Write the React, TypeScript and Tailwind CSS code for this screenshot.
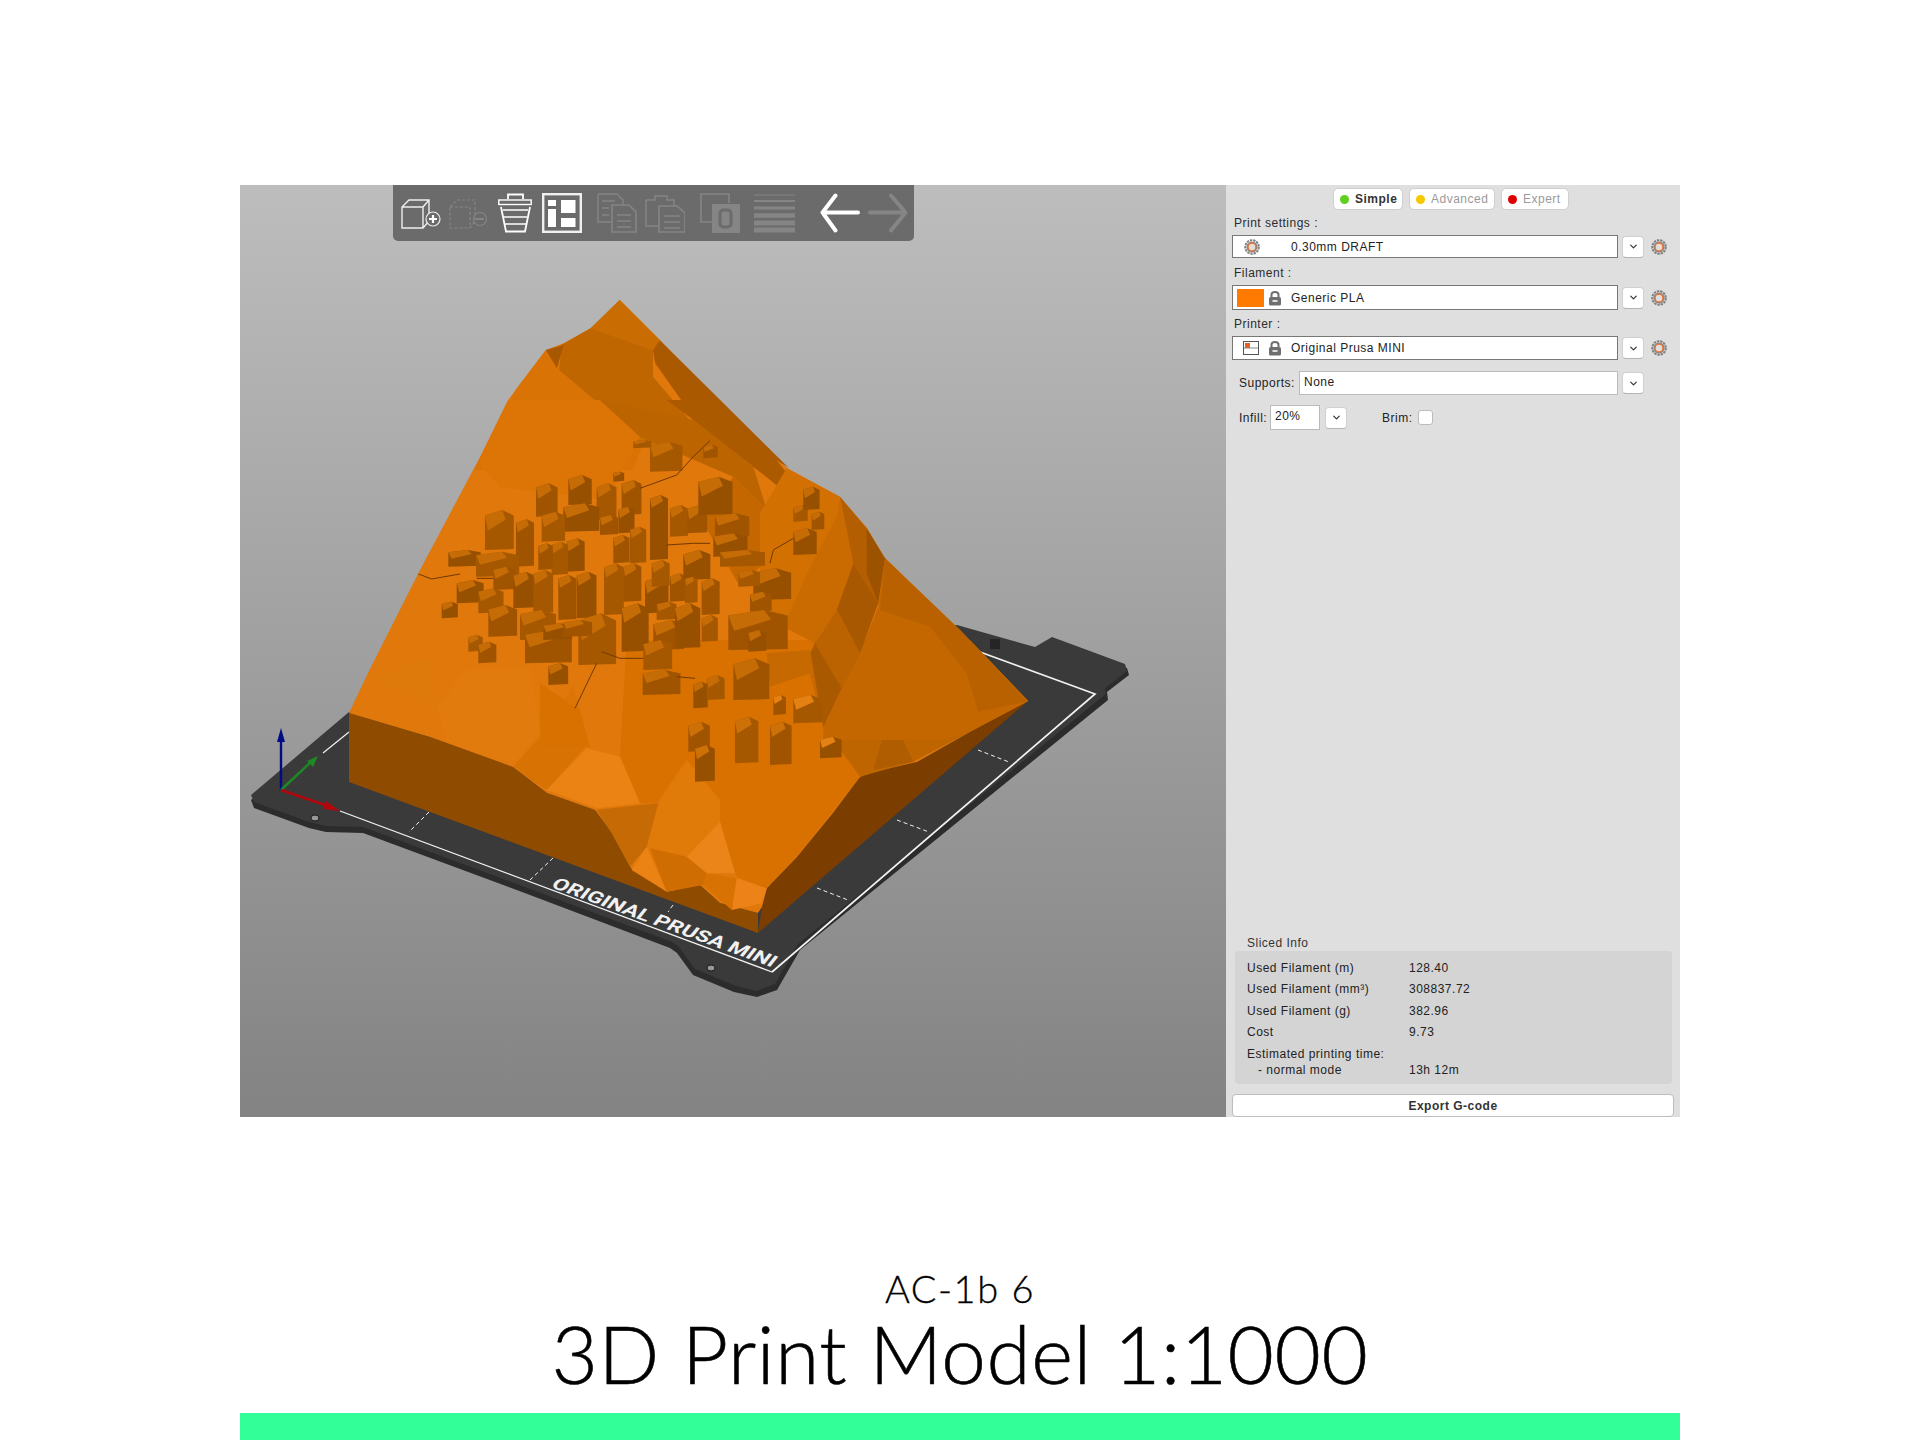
import React from "react";
import { ChevronDown } from "lucide-react";

type Facet = [string, string];

// boxes measured on the town crop, [x, top, width, bottom]
const town: number[][] = [
  [408,250,60,350],[505,225,65,315],[590,250,55,360],[665,240,55,345],[750,285,50,480],[810,315,50,410],[862,315,55,400],[895,230,95,345],
  [255,330,80,450],[348,358,50,500],[490,310,100,395],[425,335,65,425],[600,345,50,405],[655,320,45,400],[690,380,45,490],[640,405,45,490],
  [500,415,50,515],[455,425,45,525],[415,430,40,510],[145,450,90,500],[228,455,120,530],[280,500,60,570],[170,540,75,610],[235,565,70,640],
  [265,615,80,710],[340,515,60,625],[400,510,55,640],[475,525,50,660],[530,515,55,655],[612,490,55,645],[670,490,50,605],[735,530,65,640],
  [755,480,50,560],[810,520,45,605],[850,450,75,540],[855,530,35,610],[945,340,95,410],[940,400,95,470],[960,450,125,500],[905,535,50,645],
  [1060,505,105,600],[1015,510,60,560],[1050,575,60,635],[665,610,75,755],[770,605,55,660],[760,660,85,750],[825,610,70,745],[905,645,45,725],
  [985,630,165,750],[1045,690,50,755],[360,630,100,720],[375,690,130,790],[430,670,80,720],[535,640,105,795],[490,660,80,710],[445,790,55,855],
  [205,705,40,755],[235,725,50,790],[125,605,45,655],[730,720,80,810],[728,810,105,885],[880,845,40,925],[920,825,50,900],[1000,775,100,900],
  [1180,385,65,465],[1180,315,40,365],[1235,335,35,390],[1210,260,45,330],[750,125,90,215],[910,135,40,175],[640,215,30,245],[700,120,50,145],
];

// same, on the crop of the south slope
const southHouses: number[][] = [
  [445,245,60,335],[465,315,55,425],[585,230,65,370],[690,245,60,375],[840,290,60,355],[760,165,80,250],[700,165,35,225],
];

const topFacets: Facet[] = [
  ["#da7305", "685,540 835,735 900,830 880,900 525,900 620,655"],
  ["#c96c02", "850,390 785,475 925,540 940,510"],
  ["#bf6600", "785,475 720,525 715,600 835,735 1020,770 925,620 925,540"],
  ["#a85800", "685,540 725,525 710,595"],
  ["#aa5900", "940,510 925,540 930,580 1020,750 1120,800 1230,895"],
  ["#cb6d00", "835,735 1020,770 1040,810 1000,850 900,830"],
];

const townFacets: Facet[] = [
  ["#dc7406", "325,0 600,0 720,110 620,300 300,260 235,185"],
  ["#bb6400", "600,0 880,60 1060,200 1100,330 1000,230 720,110"],
  ["#ac5a00", "800,0 950,0 1125,175 1165,225 1160,280 1060,200 880,60"],
  ["#c46700", "1000,230 1100,330 1160,420 1020,560 900,350"],
];

const eastFacets: Facet[] = [
  ["#d27002", "80,85 240,170 230,230 150,380 70,560 0,500 0,220"],
  ["#c96b00", "240,170 280,370 230,510 165,610 70,560 150,380 230,230"],
  ["#c46700", "375,355 800,785 640,870 560,900 190,900 190,860 245,745 300,640 355,500"],
  ["#b96100", "375,355 600,570 800,785 655,815 620,700 510,560 360,510"],
  ["#b35e00", "240,170 320,265 355,490 280,370"],
  ["#9d5200", "320,265 375,355 355,490 320,400"],
  ["#a85800", "280,370 355,490 300,640 230,510"],
  ["#bb6300", "230,510 300,640 245,745 165,610"],
  ["#a95a00", "165,610 245,745 190,860 150,640"],
  ["#c56900", "20,640 150,630 190,860 150,700 30,740"],
];

const southFacets: Facet[] = [
  ["#d87100", "260,0 820,0 850,260 960,410 770,650 680,745 590,710 540,545 540,480 440,360 350,490 300,490 240,350"],
  ["#d87100", "150,320 120,210 0,130 0,320"],
  ["#bf6500", "820,0 1290,0 1465,183 1310,265 1120,365 960,410 850,260"],
  ["#b05c00", "1050,215 1120,365 1000,390"],
  ["#a85800", "820,100 900,130 850,260"],
  ["#e07a08", "440,360 540,480 540,545 450,650 320,620 355,490"],
  ["#ec8519", "540,545 585,700 500,700 440,650"],
  ["#d06d02", "440,650 500,700 490,735 380,755 330,625"],
  ["#ea8214", "320,620 380,755 275,690"],
  ["#c56a05", "300,495 355,490 320,620 270,680 215,580 170,510"],
  ["#ea8214", "20,450 140,325 240,350 300,490 170,505"],
  ["#ed8318", "590,715 680,745 665,790 575,810"],
  ["#d77203", "590,715 575,810 490,735 500,700"],
];

const westFacets: Facet[] = [
  ["#de790b", "90,350 280,290 280,440"],
  ["#e27b0d", "290,440 380,330 570,320 600,520 520,610 410,580 320,545"],
  ["#d87303", "600,530 745,550 620,690 520,620"],
  ["#dc7505", "600,530 700,380 745,550"],
];

const roads = [
  "M55 522 L95 537 L180 522",
  "M230 535 L280 535",
  "M720 265 L830 225 L880 170 L930 122",
  "M605 755 L660 775 L730 775",
  "M830 830 L885 835",
  "M590 790 L525 925",
  "M1110 490 L1120 450 L1180 415",
  "M800 435 L880 430 L930 430",
];

const Facets = ({ items }: { items: Facet[] }) => (
  <>
    {items.map(([fill, points]) => (
      <polygon key={points} points={points} fill={fill} />
    ))}
  </>
);

const House = ({ d, i, roof = "#c56c06" }: { d: number[]; i: number; roof?: string }) => {
  const [x, y, bw, b] = d;
  const w = bw * 1.08;
  const r = Math.min((b - y) * 0.4, w * 0.55);
  const body = i % 3 === 0 ? "#a05400" : i % 3 === 1 ? "#975000" : "#a65800";
  return (
    <g>
      <path d={`M${x} ${y + r * 0.35} L${x + w * 0.6} ${y} L${x + w} ${y + r * 0.35} L${x + w} ${b - 3} L${x} ${b} Z`} fill={body} />
      <path d={`M${x} ${y + r * 0.35} L${x + w * 0.6} ${y} L${x + w * 0.72} ${y + r * 0.6} L${x + w * 0.1} ${y + r * 1.3} Z`} fill={roof} />
    </g>
  );
};

const Scene = () => (
  <svg viewBox="240 185 986 932" className="block w-full h-full">
    <defs>
      <linearGradient id="bg" x1="0" y1="0" x2="0" y2="1">
        <stop offset="0" stopColor="#bdbdbd" />
        <stop offset="1" stopColor="#838383" />
      </linearGradient>
    </defs>
    <rect x="240" y="185" width="986" height="932" fill="url(#bg)" />
    {/* print bed */}
    <path
      d="M349 715 L957 628 L1035 650 L1052 640 L1127 668 L1129 675 L1107 692 L1108 700 L800 950 L777 990 L757 997 L734 992 L693 975 L677 953 L670 948 L530 895 L363 833 L326 832 L309 828 L254 808 L251 800 Z"
      fill="#2c2c2c"
    />
    <path
      d="M349 712 L957 625 L1035 647 L1052 637 L1125 664 L1127 671 L1105 688 L1106 694 L798 944 L775 984 L757 991 L736 986 L695 969 L679 947 L672 942 L530 889 L363 827 L326 826 L309 822 L254 802 L251 795 Z"
      fill="#3a3a3a"
    />
    <g fill="none" stroke="#f2f2f2">
      <path d="M340 811 L772 972" strokeWidth="1.3" />
      <path d="M772 972 L1095 694 L980 652" strokeWidth="1.7" />
      <path d="M349 732 L323 753" strokeWidth="1.2" />
      <path
        d="M429 812 L409 832 M553 858 L530 880 M673 905 L668 912 M978 750 L1009 762 M897 820 L929 832 M817 888 L848 900"
        strokeWidth="1"
        strokeDasharray="4 3"
      />
    </g>
    <text
      transform="matrix(0.94 0.34 -0.7 0.88 550 887)"
      fontFamily="Roboto, sans-serif"
      fontWeight="700"
      fontSize="16"
      fill="#f1f1f1"
      textLength="236"
      lengthAdjust="spacingAndGlyphs"
    >
      ORIGINAL PRUSA MINI
    </text>
    <ellipse cx="315" cy="818" rx="4" ry="3" fill="#999" stroke="#1c1c1c" />
    <ellipse cx="711" cy="968" rx="4" ry="3" fill="#999" stroke="#1c1c1c" />
    <rect x="990" y="639" width="10" height="10" fill="#252525" />
    {/* side faces */}
    <path d="M1028 701 L977 728 L917 762 L873 772 L860 777 L833 813 L797 857 L767 888 L762 907 L758 933 Z" fill="#7c3e00" />
    <path
      d="M349 713 L430 737 L513 767 L547 793 L595 810 L612 833 L623 853 L632 870 L650 878 L667 892 L700 885 L720 903 L758 913 L758 933 L349 782 Z"
      fill="#8f4b00"
    />
    {/* top of the terrain */}
    <path
      d="M620 300 L660 340 L717 400 L760 445 L787 468 L840 497 L867 528 L885 558 L960 630 L1028 701 L977 728 L917 762 L873 772 L860 777 L833 813 L797 857 L767 888 L762 907 L758 913 L720 903 L700 885 L667 892 L650 878 L632 870 L623 853 L612 833 L595 810 L547 793 L513 767 L430 737 L349 713 L368 673 L420 570 L480 457 L508 400 L546 350 L564 343 L593 327 Z"
      fill="#e0780b"
    />
    <g transform="translate(240 170) scale(0.44643 0.33333)">
      <Facets items={topFacets} />
    </g>
    <g transform="translate(400 400) scale(0.33333)">
      <Facets items={townFacets} />
    </g>
    <g transform="translate(340 560) scale(0.33333)">
      <Facets items={westFacets} />
    </g>
    <g transform="translate(540 640) scale(0.33333)">
      <Facets items={southFacets} />
    </g>
    <g transform="translate(760 440) scale(0.33333)">
      <Facets items={eastFacets} />
    </g>
    <g transform="translate(400 400) scale(0.33333)">
      {town.map((d, i) => (
        <House key={i} d={d} i={i} />
      ))}
      {roads.map((d) => (
        <path key={d} d={d} fill="none" stroke="#6e3800" strokeWidth="3" />
      ))}
    </g>
    <g transform="translate(540 640) scale(0.33333)">
      {southHouses.map((d, i) => (
        <House key={i} d={d} i={i} roof={i > 3 ? "#e58012" : "#cd7008"} />
      ))}
    </g>
    {/* axes */}
    <path d="M281 790 L281 740" stroke="#000c84" strokeWidth="2.4" />
    <polygon points="281,728 277,742 285,742" fill="#000c84" />
    <path d="M281 790 L313 760" stroke="#1c8a24" strokeWidth="2.4" />
    <polygon points="318,756 307,761 313,767" fill="#1c8a24" />
    <path d="M281 790 L328 806" stroke="#b3060c" strokeWidth="2.4" />
    <polygon points="340,811 326,801 323,809" fill="#b3060c" />
  </svg>
);

const Ico = ({ w, children, className }: { w: number; children: React.ReactNode; className?: string }) => (
  <svg width={w} height="40" viewBox={`0 0 ${w} 40`} fill="none" className={className}>
    {children}
  </svg>
);

const Toolbar = () => (
  <div className="absolute left-[153px] top-0 w-[521px] h-[56px] bg-[#6b6b6b] rounded-b-[5px] flex items-center pl-[8px]">
    <Ico w={40}>
      <path d="M1 14 L8 7 L28 7 L28 28 L22 35 L1 35 Z M1 14 L22 14 L22 35 M22 14 L28 7" stroke="#eee" strokeWidth="1.4" />
      <circle cx="32" cy="26" r="7" fill="#6b6b6b" stroke="#eee" strokeWidth="1.2" />
      <path d="M32 22 V30 M28 26 H36" stroke="#fff" strokeWidth="2.2" />
    </Ico>
    <Ico w={40} className="ml-[8px]">
      <path d="M1 14 L8 7 L26 7 L26 28 L21 35 L1 35 Z M1 14 L21 14 L21 35" stroke="#858585" strokeWidth="1.2" strokeDasharray="3 2" />
      <circle cx="31" cy="26" r="6.5" stroke="#858585" strokeWidth="1.2" />
      <path d="M27 26 H35" stroke="#858585" strokeWidth="2" />
    </Ico>
    <Ico w={34} className="ml-[9px]">
      <path d="M10 6 V1.5 H25 V6" stroke="#fff" strokeWidth="1.8" />
      <rect x="0.8" y="7" width="32.4" height="4.5" stroke="#fff" strokeWidth="1.4" />
      <path d="M3 14 L8 38.5 H27 L32 14" stroke="#fff" strokeWidth="1.8" />
      <path d="M5 17 H30 M6 24 H29 M7 31 H28" stroke="#fff" strokeWidth="1.7" />
    </Ico>
    <Ico w={40} className="ml-[10px]">
      <rect x="1.2" y="1.2" width="37.6" height="37.6" stroke="#f0f0f0" strokeWidth="2.4" />
      <rect x="6" y="7" width="8" height="6" fill="#fff" />
      <rect x="6" y="16" width="8" height="18" fill="#fff" />
      <rect x="19" y="7" width="14.5" height="13" fill="#fff" />
      <rect x="19" y="25" width="14.5" height="9" fill="#fff" />
    </Ico>
    <Ico w={40} className="ml-[15px]">
      <path d="M1 1 H20 L26 7 V12 M1 1 V29 H14" stroke="#858585" strokeWidth="1.4" />
      <path d="M15 12 H32 L39 19 V39 H15 Z" stroke="#858585" strokeWidth="1.6" />
      <path d="M5 8 H18 M5 15 H12 M5 22 H12 M20 22 H34 M20 28 H34 M20 34 H34" stroke="#858585" strokeWidth="1.4" />
    </Ico>
    <Ico w={40} className="ml-[8px]">
      <path d="M1 7 H10 V3 H22 V7 H29 V13 M1 7 V33 H13" stroke="#858585" strokeWidth="1.5" />
      <path d="M14 13 H32 L40 20 V39 H14 Z" stroke="#858585" strokeWidth="1.6" />
      <path d="M19 23 H35 M19 29 H35 M19 35 H35" stroke="#858585" strokeWidth="1.4" />
    </Ico>
    <Ico w={40} className="ml-[15px]">
      <path d="M12 29 H1 V1 H29 V10" stroke="#858585" strokeWidth="1.6" />
      <rect x="12" y="11" width="28" height="29" fill="#858585" />
      <rect x="20" y="17" width="11" height="17" rx="3.5" stroke="#6b6b6b" strokeWidth="3" />
    </Ico>
    <Ico w={41} className="ml-[14px]">
      <path d="M0 2 H41" stroke="#858585" strokeWidth="1" />
      <path d="M0 8 H41" stroke="#858585" strokeWidth="2" />
      <path d="M0 15 H41" stroke="#858585" strokeWidth="3" />
      <path d="M0 22.5 H41" stroke="#858585" strokeWidth="4.5" />
      <path d="M0 30 H41" stroke="#858585" strokeWidth="5" />
      <path d="M0 37 H41" stroke="#858585" strokeWidth="5" />
    </Ico>
    <Ico w={40} className="ml-[25px]">
      <path d="M15.5 2.5 L2.5 19.5 L15.5 37.5 M2.5 19.5 H38" stroke="#fff" strokeWidth="4" strokeLinecap="round" strokeLinejoin="round" />
    </Ico>
    <Ico w={40} className="ml-[8px]">
      <path d="M23 2.5 L37.5 19.5 L23 37.5 M2 19.5 H37.5" stroke="#858585" strokeWidth="4" strokeLinecap="round" strokeLinejoin="round" />
    </Ico>
  </div>
);

const Gear = () => (
  <svg width="16" height="16" viewBox="0 0 16 16" className="shrink-0">
    <circle cx="8" cy="8" r="6.8" fill="none" stroke="#808080" strokeWidth="2" strokeDasharray="2.4 0.9" />
    <circle cx="8" cy="8" r="5.6" fill="#8a8a8a" />
    <circle cx="8" cy="8" r="3.9" fill="#e2ddd9" stroke="#ea6d2c" strokeWidth="1.1" />
  </svg>
);

const Lock = () => (
  <svg width="14" height="16" viewBox="0 0 14 16" className="shrink-0">
    <path d="M3.5 7 V4.5 C3.5 1 10.5 1 10.5 4.5 V7" fill="none" stroke="#6f6f6f" strokeWidth="2" />
    <rect x="1" y="7" width="12" height="8.5" rx="1.5" fill="#6f6f6f" />
    <rect x="4.5" y="10" width="5" height="2" fill="#ddd" />
  </svg>
);

const ChevBtn = () => (
  <div className="w-[22px] h-[22px] shrink-0 bg-white rounded-[4px] border border-[#d0d0d0] border-b-[#b4b4b4] flex items-center justify-center">
    <ChevronDown size={11} strokeWidth={2.6} color="#333" />
  </div>
);

const Label = ({ children, className = "" }: { children: React.ReactNode; className?: string }) => (
  <div className={`h-[14px] leading-[14px] pl-[8px] text-[#2b2b2b] ${className}`}>{children}</div>
);

const Combo = ({ h, icon, text, mt }: { h: string; icon: React.ReactNode; text: string; mt: string }) => (
  <div className={`flex items-center ml-[6px] ${mt}`}>
    <div className={`w-[386px] ${h} bg-white border border-[#777] flex items-center text-[#222]`}>
      <div className="w-[58px] shrink-0 flex items-center">{icon}</div>
      <span>{text}</span>
    </div>
    <div className="ml-[4px]">
      <ChevBtn />
    </div>
    <div className="ml-[7px]">
      <Gear />
    </div>
  </div>
);

const ModeBtn = ({ color, text, w, active }: { color: string; text: string; w: string; active?: boolean }) => (
  <div className={`${w} h-[22px] bg-white rounded-[5px] border border-[#cfcfcf] flex items-center pl-[6px] gap-[6px]`}>
    <span className="w-[9px] h-[9px] rounded-full" style={{ background: color }} />
    <span className={active ? "font-bold text-[#333]" : "text-[#9a9a9a]"}>{text}</span>
  </div>
);

const sliced = [
  ["Used Filament (m)", "128.40"],
  ["Used Filament (mm³)", "308837.72"],
  ["Used Filament (g)", "382.96"],
  ["Cost", "9.73"],
];

const Panel = () => (
  <div className="w-[454px] shrink-0 h-full bg-[#dfdfdf] flex flex-col font-['Liberation_Sans',Arial,sans-serif] text-[12px] tracking-[0.5px]">
    <div className="flex gap-[6px] pt-[3px] pl-[107px]">
      <ModeBtn color="#5fd01e" text="Simple" w="w-[70px]" active />
      <ModeBtn color="#f6c800" text="Advanced" w="w-[86px]" />
      <ModeBtn color="#e00000" text="Expert" w="w-[68px]" />
    </div>
    <Label className="mt-[6px]">Print settings :</Label>
    <Combo
      mt="mt-[5px]"
      h="h-[23px]"
      text="0.30mm DRAFT"
      icon={
        <div className="pl-[11px]">
          <Gear />
        </div>
      }
    />
    <Label className="mt-[8px]">Filament :</Label>
    <Combo
      mt="mt-[5px]"
      h="h-[25px]"
      text="Generic PLA"
      icon={
        <div className="flex items-center gap-[4px] pl-[4px]">
          <div className="w-[27px] h-[18px] bg-[#ff7a00]" />
          <Lock />
        </div>
      }
    />
    <Label className="mt-[7px]">Printer :</Label>
    <Combo
      mt="mt-[5px]"
      h="h-[24px]"
      text="Original Prusa MINI"
      icon={
        <div className="flex items-center gap-[9px] pl-[10px]">
          <svg width="16" height="14" viewBox="0 0 16 14">
            <rect x="0.5" y="0.5" width="15" height="13" fill="#fff" stroke="#555" />
            <rect x="2" y="2" width="5" height="5" fill="#e8601c" />
            <path d="M1 7 H15" stroke="#888" />
          </svg>
          <Lock />
        </div>
      }
    />
    <div className="flex items-center mt-[11px] h-[24px] text-[#222]">
      <span className="pl-[13px] w-[73px]">Supports:</span>
      <div className="w-[319px] h-[24px] bg-white border border-[#bbb] pl-[4px] leading-[20px]">None</div>
      <div className="ml-[4px]">
        <ChevBtn />
      </div>
    </div>
    <div className="flex items-center mt-[10px] h-[25px] text-[#222]">
      <span className="pl-[13px] w-[44px]">Infill:</span>
      <div className="w-[50px] h-[25px] bg-white border border-[#bbb] pl-[4px] leading-[21px]">20%</div>
      <div className="ml-[5px]">
        <ChevBtn />
      </div>
      <span className="ml-[35px]">Brim:</span>
      <div className="ml-[5px] w-[15px] h-[15px] bg-white rounded-[3px] border border-[#bbb]" />
    </div>
    <div className="mt-auto pl-[21px] h-[14px] leading-[14px] text-[#333]">Sliced Info</div>
    <div className="mt-[1px] ml-[9px] w-[437px] h-[133px] bg-[#d4d4d4] rounded-[4px] pt-[7px] pl-[12px] text-[#222]">
      {sliced.map(([k, v]) => (
        <div key={k} className="flex h-[21.3px] leading-[21px]">
          <span className="w-[162px]">{k}</span>
          <span>{v}</span>
        </div>
      ))}
      <div className="h-[15px] leading-[15px] mt-[4px]">Estimated printing time:</div>
      <div className="flex h-[16px] leading-[16px]">
        <span className="w-[162px] pl-[11px]">- normal mode</span>
        <span>13h 12m</span>
      </div>
    </div>
    <div className="mt-[10px] ml-[6px] w-[442px] h-[23px] bg-white rounded-[4px] border border-[#bdbdbd] flex items-center justify-center font-bold text-[#333]">
      Export G-code
    </div>
  </div>
);

export default function App() {
  return (
    <div className="w-[1920px] h-[1440px] bg-white flex flex-col items-center pt-[185px] font-['Lato',sans-serif]">
      <div className="w-[1440px] h-[932px] flex">
        <div className="relative flex-1 h-full">
          <Scene />
          <Toolbar />
        </div>
        <Panel />
      </div>
      <div className="mt-[151px] h-[40px] leading-[40px] text-[38px] font-light text-black tracking-[1.5px] [-webkit-text-stroke:0.3px_black]">
        AC-1b 6
      </div>
      <div className="mt-[5px] h-[80px] leading-[80px] text-[80px] font-light text-black tracking-[0.55px] [-webkit-text-stroke:0.6px_black]">
        3D Print Model 1:1000
      </div>
      <div className="mt-auto w-[1440px] h-[27px] bg-[#33ff99]" />
    </div>
  );
}
